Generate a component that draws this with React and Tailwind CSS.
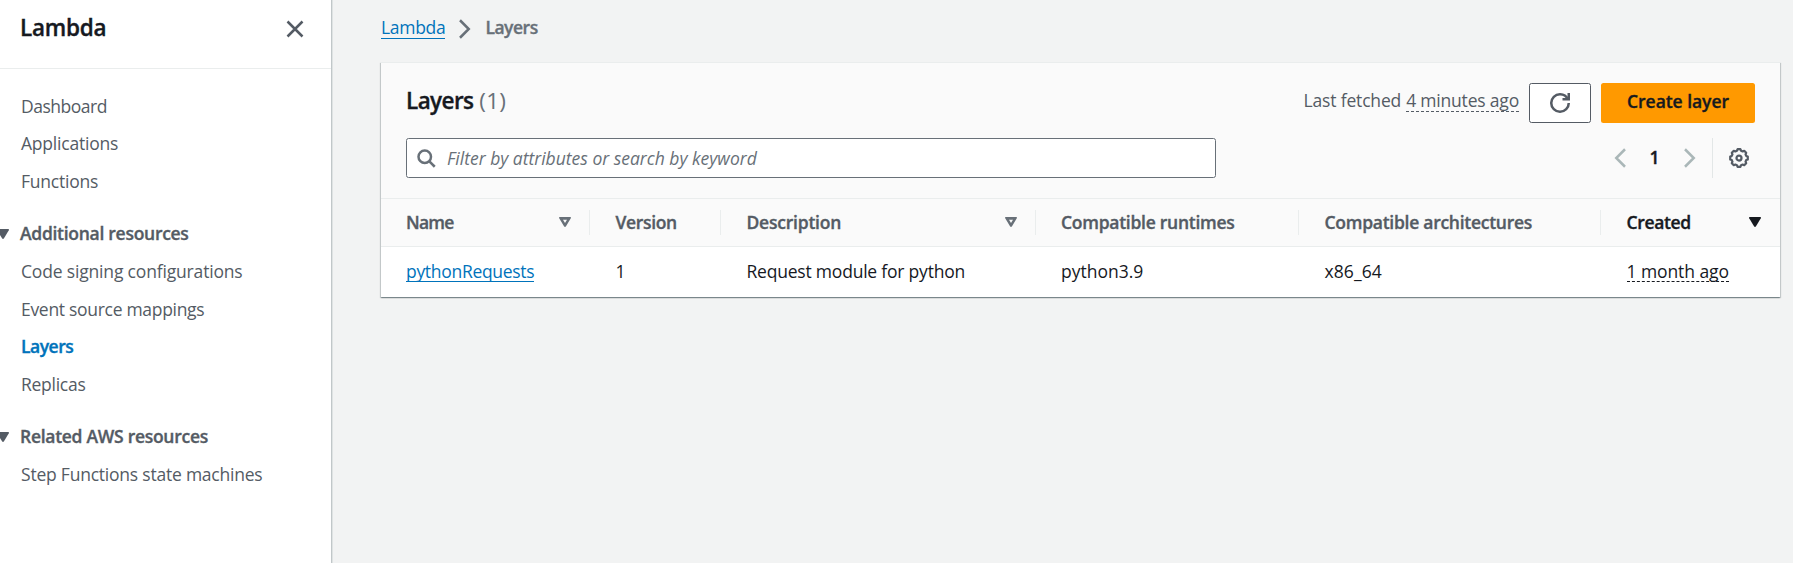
const NAV_TOP = [
  { label: "Dashboard", track: "tracking-[-0.49px]" },
  { label: "Applications", track: "tracking-[-0.21px]" },
  { label: "Functions", track: "tracking-[-0.22px]" },
];

const NAV_SECTIONS = [
  {
    title: "Additional resources",
    space: "pt-[27.7px]",
    items: [
      { label: "Code signing configurations", track: "tracking-[-0.17px]" },
      { label: "Event source mappings", track: "tracking-[-0.3px]" },
      { label: "Layers", track: "tracking-[-0.48px]", active: true },
      { label: "Replicas", track: "tracking-[-0.26px]" },
    ],
  },
  {
    title: "Related AWS resources",
    space: "pt-[27.5px]",
    items: [{ label: "Step Functions state machines", track: "tracking-[-0.22px]" }],
  },
];

const GRID = "grid grid-cols-[208.5px_131px_315.5px_262.5px_302px_1fr]";
const HEAVY = "font-semibold [-webkit-text-stroke:0.35px_currentColor]";

const COLUMNS = [
  { label: "Name", track: "tracking-[-0.8px]", sort: "none" },
  { label: "Version", track: "tracking-[-0.35px]" },
  { label: "Description", track: "tracking-[-0.22px]", sort: "none" },
  { label: "Compatible runtimes", track: "tracking-[-0.27px]" },
  { label: "Compatible architectures", track: "tracking-[-0.27px]" },
  { label: "Created", track: "tracking-[-0.35px]", sort: "desc" },
];

/* Eight-toothed gear outline on a 16-unit canvas */
const GEAR = Array.from({ length: 8 }, (_, i) => {
  const point = (deg, r) => {
    const a = ((i * 45 + deg) * Math.PI) / 180;
    return `${(8 + r * Math.sin(a)).toFixed(2)} ${(8 - r * Math.cos(a)).toFixed(2)}`;
  };
  return `${i ? "L" : "M"}${point(-9, 7.1)}L${point(9, 7.1)}L${point(16, 6)}L${point(29, 6)}`;
}).join("") + "Z";

function Icon({ children, className = "", size = 20 }) {
  return (
    <svg
      width={size}
      height={size}
      viewBox="0 0 16 16"
      fill="none"
      stroke="currentColor"
      strokeWidth="2"
      className={`shrink-0 ${className}`}
    >
      {children}
    </svg>
  );
}

function Caret({ hollow, className = "" }) {
  return (
    <svg width="12" height="10" viewBox="0 0 12 10" className={`shrink-0 ${className}`}>
      <path
        fill="currentColor"
        fillRule="evenodd"
        d={
          hollow
            ? "M.7 0h10.6q1 .2.5 1.2L7 9.3Q6 10.6 5 9.3L.2 1.2Q-.3.2.7 0ZM4 2.7 6 6.1 8 2.7Z"
            : "M.7 0h10.6q1 .2.5 1.2L7 9.3Q6 10.6 5 9.3L.2 1.2Q-.3.2.7 0Z"
        }
      />
    </svg>
  );
}

function NavItem({ label, track, active }) {
  return (
    <li>
      <a className={`block ${track} ${active ? `${HEAVY} text-[#0073bb]` : ""}`}>{label}</a>
    </li>
  );
}

function Sidebar() {
  return (
    <aside className="w-[331px] shrink-0 overflow-hidden bg-white text-[#545b64] shadow-[1px_0_0_0_#c1c7c9,2px_0_0_0_#dfe3e3]">
      <div className="flex h-[69px] items-start justify-between border-b border-[#eaeded] pt-[14px] pr-[26px] pl-5">
        <h1 className={`text-[22.5px]/[28.5px] tracking-[-0.24px] text-[#16191f] ${HEAVY}`}>Lambda</h1>
        <Icon className="mt-[5px]">
          <path d="m2 2 12 12M14 2 2 14" />
        </Icon>
      </div>
      <nav className="pt-[25px] pl-[21px]">
        <ul className="flex flex-col gap-[12.4px]">
          {NAV_TOP.map((item) => (
            <NavItem key={item.label} {...item} />
          ))}
        </ul>
        {NAV_SECTIONS.map((section) => (
          <section key={section.title} className={section.space}>
            <h2 className={`-ml-6 flex items-center gap-[11px] tracking-[-0.28px] ${HEAVY}`}>
              <Caret />
              {section.title}
            </h2>
            <ul className="mt-[13px] flex flex-col gap-[12.5px]">
              {section.items.map((item) => (
                <NavItem key={item.label} {...item} />
              ))}
            </ul>
          </section>
        ))}
      </nav>
    </aside>
  );
}

function CardHeader() {
  return (
    <header className="h-[135px] px-[25px] pt-5">
      <div className="flex items-start">
        <h2 className="mt-1 flex gap-[6px] text-[22.5px]/[27.5px] text-[#16191f]">
          <span className={`tracking-[-0.6px] ${HEAVY}`}>Layers</span>
          <span className="tracking-[0.25px] text-[#687078]">(1)</span>
        </h2>
        <div className="ml-auto flex items-start gap-[10px]">
          <p className="mt-[5px] flex gap-[5px] text-[#545b64]">
            <span className="tracking-[-0.17px]">Last fetched</span>
            <span className="h-6 border-b border-dashed border-[#545b64] tracking-[-0.19px]">4 minutes ago</span>
          </p>
          <button className="flex h-10 w-[62px] items-center justify-center rounded-[2.5px] border border-[#545b64] bg-white text-[#545b64]">
            <Icon>
              <path d="M10 5h5V0" />
              <path d="M15 8a6.957 6.957 0 0 1-7 7 6.957 6.957 0 0 1-7-7 6.957 6.957 0 0 1 7-7 6.87 6.87 0 0 1 6.3 4" />
            </Icon>
          </button>
          <button
            className={`flex h-10 w-[154px] justify-center rounded-[2.5px] bg-[#ff9900] pt-[5.5px] tracking-[-0.05px] text-[#16191f] ${HEAVY}`}
          >
            Create layer
          </button>
        </div>
      </div>
      <div className="mt-[15px] flex">
        <div className="flex h-10 w-[810px] items-center rounded-[2.5px] border border-[#687078] bg-white pl-[9px] text-[#687078]">
          <Icon>
            <circle cx="7" cy="7" r="5" />
            <path d="m15 15-4.5-4.5" />
          </Icon>
          <span className="ml-[11px] italic">Filter by attributes or search by keyword</span>
        </div>
        <div className="ml-auto flex h-10 items-center pr-[6px]">
          <Icon className="text-[#aab7b8]">
            <path d="m12 1-7 7 7 7" />
          </Icon>
          <span className={`w-[49px] pb-px text-center text-[#16191f] ${HEAVY}`}>1</span>
          <Icon className="ml-px text-[#aab7b8]">
            <path d="m4 1 7 7-7 7" />
          </Icon>
          <span className="mr-4 ml-[12px] h-10 w-px bg-[#e3e7e7]" />
          <Icon className="text-[#545b64]">
            <path strokeWidth="1.8" strokeLinejoin="round" d={GEAR} />
            <circle cx="8" cy="8" r="2" strokeWidth="1.8" />
          </Icon>
        </div>
      </div>
    </header>
  );
}

function LayersTable() {
  return (
    <div>
      <div className={`${GRID} h-[49px] border-y border-[#eaeded] text-[#545b64]`}>
        {COLUMNS.map((col, i) => (
          <div
            key={col.label}
            className={`flex items-center justify-between pb-px ${i && i !== 3 ? "pl-[26px]" : "pl-[25px]"} ${
              col.sort === "desc" ? "pr-[19px] text-[#16191f]" : "pr-0"
            }`}
          >
            <span className={`${col.track} ${HEAVY}`}>{col.label}</span>
            <span className="flex items-center">
              {col.sort && (
                <Caret hollow={col.sort === "none"} className={col.sort === "none" ? "mr-[18px] text-[#687078]" : ""} />
              )}
              {i < COLUMNS.length - 1 && <span className="h-[25px] w-px bg-[#eaeded]" />}
            </span>
          </div>
        ))}
      </div>
      <div className={`${GRID} h-[50px] bg-white pt-3 text-[#16191f]`}>
        <div className="pl-[25px]">
          <a className="inline-block h-[23px] border-b border-[#0073bb] tracking-[-0.3px] text-[#0073bb]">
            pythonRequests
          </a>
        </div>
        <div className="pl-[26px]">1</div>
        <div className="pl-[26px] tracking-[-0.21px]">Request module for python</div>
        <div className="pl-[25px]">python3.9</div>
        <div className="pl-[26px] tracking-[0.1px]">x86_64</div>
        <div className="pl-[26px]">
          <span className="inline-block h-[23px] border-b border-dashed border-[#16191f] tracking-[-0.08px]">
            1 month ago
          </span>
        </div>
      </div>
    </div>
  );
}

export default function App() {
  return (
    <div className="flex h-[563px] overflow-hidden bg-[#f2f3f3] font-['Open_Sans',sans-serif] text-[17.5px]/[25px]">
      <Sidebar />
      <main className="min-w-0 flex-1 pt-[15px] pr-[13px] pl-[50px]">
        <nav className="flex h-[47px] items-start">
          <a className="h-6 border-b border-[#0073bb] tracking-[-0.3px] text-[#0073bb]">Lambda</a>
          <Icon className="mt-1 ml-[10px] text-[#687078]">
            <path d="m4 1 7 7-7 7" />
          </Icon>
          <span className={`ml-[10px] tracking-[-0.48px] text-[#687078] ${HEAVY}`}>Layers</span>
        </nav>
        <section className="border-t border-[#eaeded] bg-[#fafafa] shadow-[0_1px_1px_0_rgba(0,28,36,0.3),1px_1px_1px_0_rgba(0,28,36,0.15),-1px_1px_1px_0_rgba(0,28,36,0.15)]">
          <CardHeader />
          <LayersTable />
        </section>
      </main>
    </div>
  );
}
